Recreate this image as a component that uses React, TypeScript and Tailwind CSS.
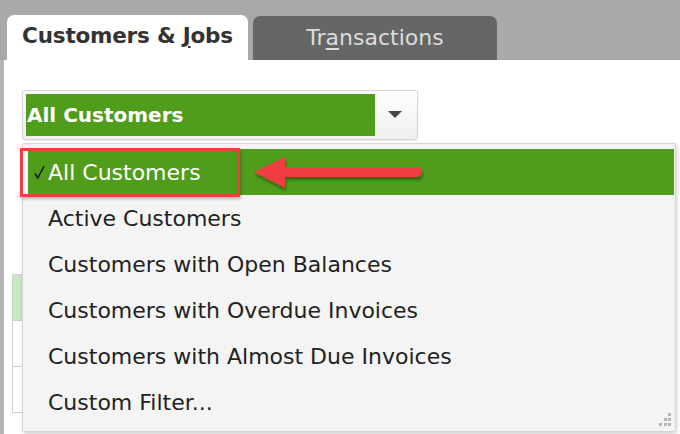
const items = [
  'Active Customers',
  'Customers with Open Balances',
  'Customers with Overdue Invoices',
  'Customers with Almost Due Invoices',
  'Custom Filter...',
];

const App = () => {
  return (
    <div className="w-[680px] h-[434px] flex flex-col overflow-hidden bg-[#a9a9a9] font-['DejaVu_Sans',sans-serif]">
      {/* tab strip */}
      <div className="h-[60px] flex items-end gap-[5px] pl-[7px]">
        <div className="w-[241px] h-[45px] bg-white rounded-t-[7px] flex items-center justify-center pb-[2px] text-[21.5px] font-bold text-[#333] tracking-[-0.2px]">
          Customers &amp;&nbsp;<span className="underline underline-offset-[3px]">J</span>obs
        </div>
        <div className="w-[244px] h-[44px] bg-[#666] rounded-t-[7px] flex items-center justify-center pb-[2px] text-[22px] text-[#dcdcdc]">
          Tr<span className="underline underline-offset-[3px]">a</span>nsactions
        </div>
      </div>

      {/* panel */}
      <div className="relative flex-1 bg-white border-l-[4px] border-[#b4b4b4]">
        <div className="pt-[30px] pl-[18px]">
          <div className="w-[396px] h-[50px] flex p-[3px] rounded-[3px] border border-[#d2d2d2] bg-gradient-to-b from-white to-[#efefef] shadow-[0_1px_1px_rgba(0,0,0,0.08)]">
            <div className="w-[349px] bg-[#4f9d1a] flex items-center pl-[1px] text-[20px] font-bold text-white">
              All Customers
            </div>
            <div className="flex-1 flex items-center justify-center">
              <svg width="14" height="8" viewBox="0 0 14 8">
                <path d="M0 0 H14 L7 7 Z" fill="#444" />
              </svg>
            </div>
          </div>
        </div>

        {/* table behind the list */}
        <div className="mt-[134px] ml-[8px] w-[20px] border-l border-t border-[#cfcfcf]">
          <div className="h-[46px] bg-[#c9e7c4] border-b border-[#cfcfcf]" />
          <div className="h-[46px] border-b border-[#cfcfcf]" />
          <div className="h-[46px] border-b border-[#cfcfcf]" />
        </div>

        {/* dropdown list */}
        <div className="absolute left-[18px] top-[83px] w-[654px] h-[289px] bg-[#f4f4f4] border border-[#d6d6d6] rounded-[2px] shadow-[1px_2px_4px_rgba(0,0,0,0.18)] pt-[5px] pl-[5px] pr-[1px]">
          <div className="h-[46px] bg-[#4f9d1a] flex items-center text-[22px] text-white">
            <svg className="ml-[6px] mr-[3px]" width="11" height="14" viewBox="0 0 11 14">
              <path d="M1 8.5 L3.8 13 L10 1" fill="none" stroke="#1a1a1a" strokeWidth="1.6" />
            </svg>
            <span>All Customers</span>
          </div>
          {items.map((item) => (
            <div key={item} className="h-[46px] flex items-center pl-[20px] text-[22px] text-[#222]">
              {item}
            </div>
          ))}
          <svg className="absolute right-[3px] bottom-[4px]" width="16" height="16" viewBox="0 0 16 16">
            <g fill="#b5b5b5">
              <rect x="12" y="2" width="3" height="3" />
              <rect x="8" y="7" width="3" height="3" />
              <rect x="12" y="7" width="3" height="3" />
              <rect x="3" y="12" width="3" height="3" />
              <rect x="8" y="12" width="3" height="3" />
              <rect x="12" y="12" width="3" height="3" />
            </g>
          </svg>
        </div>

        {/* callout */}
        <div className="absolute left-[16px] top-[88px] w-[220px] h-[49px] border-[3px] border-[#ef3e42] shadow-[1px_2px_3px_rgba(0,0,0,0.25)]" />
        <svg className="absolute left-[244px] top-[94px]" width="190" height="40" viewBox="0 0 190 40">
          <defs>
            <filter id="sh" x="-10%" y="-30%" width="120%" height="170%">
              <feDropShadow dx="1" dy="3" stdDeviation="1.5" floodColor="#000" floodOpacity="0.35" />
            </filter>
          </defs>
          <g filter="url(#sh)" fill="#ef3e42">
            <path d="M6 18 L37 3 L37 34 Z" />
            <rect x="30" y="13" width="144" height="10" rx="5" />
          </g>
        </svg>
      </div>
    </div>
  );
};

export default App;
